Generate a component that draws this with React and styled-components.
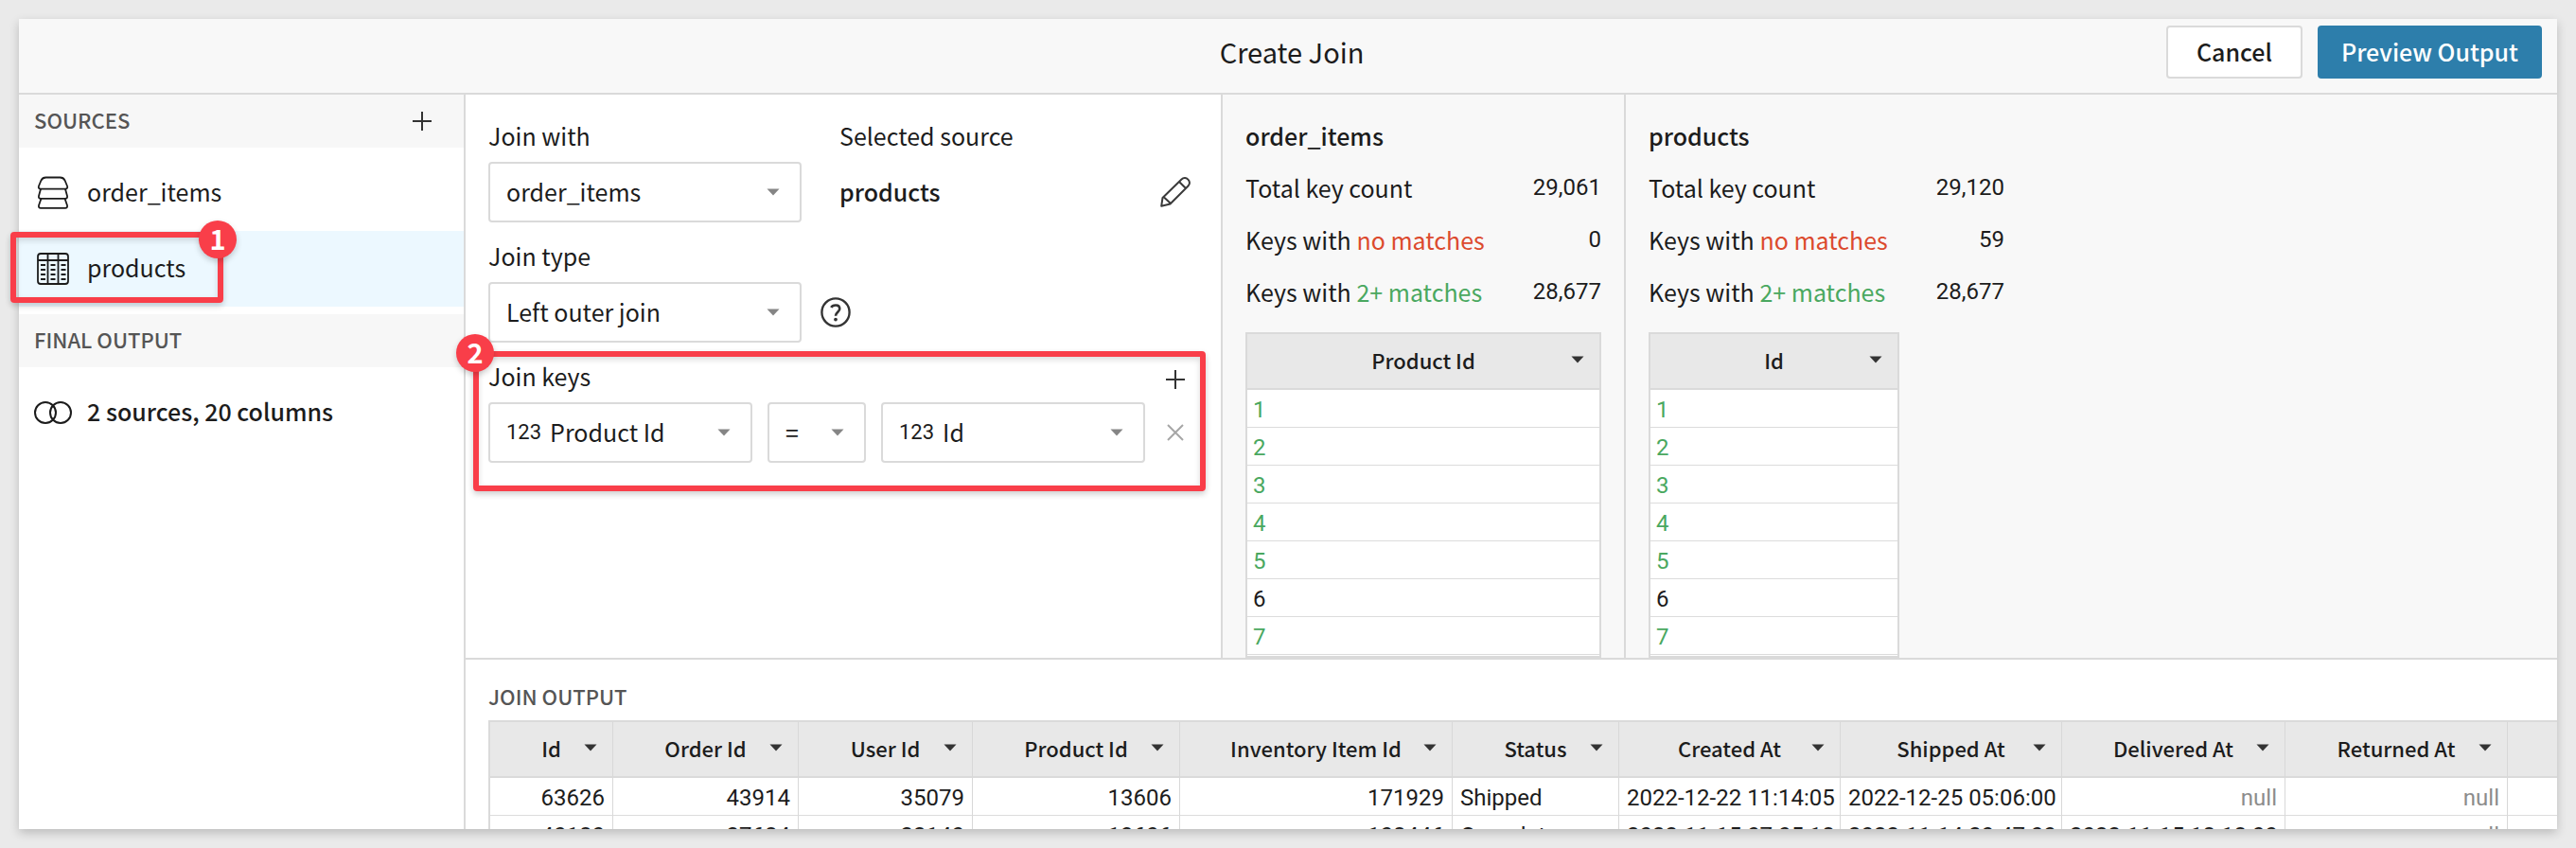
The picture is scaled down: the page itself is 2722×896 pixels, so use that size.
import React from "react";
import styled, { createGlobalStyle, css } from "styled-components";

const UI = '"Noto Sans CJK SC", "Open Sans", sans-serif';
const DATA = 'Roboto, "Liberation Sans", sans-serif';

const GlobalStyle = createGlobalStyle`
  *, *::before, *::after { box-sizing: border-box; }
  body {
    margin: 0;
    background: #eaeaea;
    color: #1c1c1c;
    font-family: ${UI};
    font-size: 25px;
    line-height: 40px;
  }
  button, select { font: inherit; color: inherit; }
`;

const Page = styled.div`
  height: 100vh;
  padding: 20px;
`;

const Frame = styled.div`
  display: flex;
  flex-direction: column;
  height: 100%;
  background: #fff;
  box-shadow: 0 4px 10px rgba(0, 0, 0, 0.2);
`;

const Header = styled.header`
  display: grid;
  grid-template-columns: 1fr auto 1fr;
  align-items: start;
  padding: 7px 16px 15px 24px;
  background: #f8f8f8;
  border-bottom: 2px solid #dadada;
`;

const Title = styled.h1`
  grid-column: 2;
  margin: 0;
  font-size: 29px;
  font-weight: 400;
  line-height: 54px;
`;

const Actions = styled.div`
  display: flex;
  justify-content: flex-end;
  gap: 16px;
`;

const Button = styled.button`
  height: 56px;
  padding: 0 ${(p) => (p.$primary ? 23 : 30)}px 2px;
  border: 2px solid ${(p) => (p.$primary ? "#2d7eab" : "#dadada")};
  border-radius: 4px;
  background: ${(p) => (p.$primary ? "#2d7eab" : "#fff")};
  color: ${(p) => (p.$primary ? "#fff" : "#1c1c1c")};
  font-weight: 500;
`;

const Body = styled.div`
  display: flex;
  flex: 1;
  min-height: 0;
`;

const Sidebar = styled.aside`
  flex: none;
  width: 472px;
  border-right: 2px solid #dadada;
`;

const SectionBar = styled.div`
  display: flex;
  align-items: center;
  justify-content: space-between;
  height: 56px;
  padding: 0 28px 0 16px;
  background: #f7f7f7;
`;

const SectionTitle = styled.h2`
  margin: 0;
  padding-bottom: 4px;
  color: #555;
  font-size: 22px;
  font-weight: 500;
  line-height: 36px;
`;

const SourceList = styled.ul`
  margin: 0;
  padding: 8px 0;
  list-style: none;
`;

const SourceRow = styled.li`
  position: relative;
  display: flex;
  align-items: center;
  gap: 16px;
  height: 80px;
  padding: 0 16px;
  background: ${(p) => (p.$selected ? "#ecf8ff" : "transparent")};
  font-weight: ${(p) => (p.$strong ? 500 : 400)};
`;

const SourceName = styled.span`
  padding-bottom: 4px;
`;

const IconButton = styled.button`
  display: flex;
  align-items: center;
  justify-content: center;
  flex: none;
  width: 32px;
  height: 32px;
  padding: 0;
  border: 0;
  background: none;
`;

const Workspace = styled.main`
  display: flex;
  flex: 1;
  flex-direction: column;
  min-width: 0;
`;

const Upper = styled.div`
  display: flex;
  flex: 1;
  min-height: 0;
`;

const JoinForm = styled.form`
  flex: none;
  width: 800px;
  padding: 23px 32px 0 24px;
  border-right: 2px solid #dadada;
`;

const FormRow = styled.div`
  position: relative;
  display: flex;
  gap: 40px;
  margin-bottom: 15px;
`;

const Field = styled.div`
  display: flex;
  flex-direction: column;
  flex: ${(p) => (p.$grow ? 1 : "none")};
  gap: 8px;
`;

const LabelLine = styled.div`
  display: flex;
  align-items: flex-end;
  justify-content: space-between;
  height: 40px;
`;

const FieldLine = styled.div`
  display: flex;
  align-items: center;
  justify-content: ${(p) => (p.$spread ? "space-between" : "flex-start")};
  gap: ${(p) => p.$gap || 16}px;
  height: 64px;
`;

const SelectedName = styled.strong`
  padding-bottom: 2px;
  font-weight: 500;
`;

const SelectBox = styled.div`
  display: flex;
  align-items: center;
  gap: 9px;
  width: ${(p) => p.$width}px;
  height: 64px;
  padding: 0 21px 0 17px;
  border: 2px solid #dadada;
  border-radius: 4px;
  background: #fff;
`;

const Select = styled.select`
  flex: 1;
  min-width: 0;
  height: 56px;
  padding: 0 0 2px;
  border: 0;
  outline: 0;
  background: transparent;
  appearance: none;
`;

const TypeMark = styled.span`
  font-family: ${DATA};
  font-size: 22px;
`;

const Annotation = styled.div`
  position: absolute;
  z-index: 2;
  border: 6px solid #f93e49;
  border-radius: 4px;
  box-shadow: 0 3px 6px rgba(0, 0, 0, 0.2), inset 0 3px 6px rgba(0, 0, 0, 0.14);
  pointer-events: none;
  ${(p) =>
    p.$target === "source"
      ? css`top: 1px; left: -9px; width: 225px; height: 75px;`
      : css`top: -6px; left: -16px; right: -16px; height: 148px;`}
`;

const Badge = styled.span`
  position: absolute;
  ${(p) => (p.$side === "right" ? "top: -18px; right: -20px;" : "top: -24px; left: -24px;")}
  width: 40px;
  height: 40px;
  border-radius: 50%;
  background: #f93e49;
  box-shadow: 0 3px 6px rgba(0, 0, 0, 0.2);
  color: #fff;
  font-size: 29px;
  font-weight: 700;
  line-height: 36px;
  text-align: center;
`;

const StatPanel = styled.section`
  display: flex;
  flex-direction: column;
  flex: ${(p) => (p.$last ? 1 : "none")};
  min-height: 0;
  padding: 23px 24px 0;
  border-right: ${(p) => (p.$last ? 0 : 2)}px solid #dadada;
  background: #f8f8f8;
`;

const PanelTitle = styled.h2`
  margin: 0 0 8px;
  font-size: 25px;
  font-weight: 500;
  line-height: 40px;
`;

const Stats = styled.dl`
  width: 376px;
  margin: 0 0 15px;
`;

const Stat = styled.div`
  display: flex;
  justify-content: space-between;
  height: 55px;
`;

const StatLabel = styled.dt`
  line-height: 54px;
`;

const StatValue = styled.dd`
  margin: 0;
  font-family: ${DATA};
  font-size: 24px;
  line-height: 54px;
`;

const Mark = styled.span`
  color: ${(p) => (p.$good ? "#4aa860" : "#dc4a2e")};
`;

const TableFrame = styled.div`
  flex: 1;
  width: ${(p) => (p.$width ? `${p.$width}px` : "auto")};
  min-height: 0;
  overflow: hidden;
  border: 2px solid #dadada;
  ${(p) => p.$open && "border-right: 0; border-bottom: 0;"}
  background: #fff;
`;

const Table = styled.table`
  width: 100%;
  border-collapse: separate;
  border-spacing: 0;
  table-layout: fixed;
`;

const HeadCell = styled.th`
  height: 59px;
  padding: 0 16px 4px;
  border-bottom: 2px solid #dadada;
  border-right: ${(p) => (p.$line ? 1 : 0)}px solid #d8d8d8;
  background: #e8e8e8;
  font-size: 22px;
  font-weight: 500;
  line-height: 40px;
`;

const HeadLine = styled.div`
  display: grid;
  grid-template-columns: 14px 1fr 14px;
  align-items: center;
  white-space: nowrap;
`;

const HeadText = styled.span`
  grid-column: 2;
`;

const Cell = styled.td`
  height: 40px;
  padding: 3px ${(p) => (p.$line ? 8 : 6)}px 0;
  border-bottom: 1px solid #dcdcdc;
  border-right: ${(p) => (p.$line ? 1 : 0)}px solid #d8d8d8;
  color: ${(p) => (p.$tone === "null" ? "#8c8c8c" : p.$tone === "match" ? "#4aa860" : "#1c1c1c")};
  font-family: ${DATA};
  font-size: 24px;
  line-height: 36px;
  text-align: ${(p) => (p.$right ? "right" : "left")};
  white-space: nowrap;
`;

const OutputPanel = styled.section`
  display: flex;
  flex-direction: column;
  flex: none;
  height: 181px;
  padding: 20px 0 0 24px;
  border-top: 2px solid #dadada;
  background: #fff;
`;

const OutputTitle = styled(SectionTitle)`
  margin-bottom: 4px;
`;

const Arrow = ({ color = "#858585" }) => (
  <svg width="14" height="8" viewBox="0 0 14 8" aria-hidden="true">
    <path d="M0.5 0.5h13L7 7.5z" fill={color} />
  </svg>
);

const Plus = () => (
  <svg width="20" height="20" viewBox="0 0 20 20" fill="none" stroke="#333" strokeWidth="2" aria-hidden="true">
    <path d="M10 0v20M0 10h20" />
  </svg>
);

const Cross = () => (
  <svg width="20" height="20" viewBox="0 0 20 20" fill="none" stroke="#a6a6a6" strokeWidth="2" aria-hidden="true">
    <path d="M2 2l16 16M18 2L2 18" />
  </svg>
);

const Pencil = () => (
  <svg width="32" height="32" viewBox="0 0 32 32" fill="none" stroke="#3a3a3a" strokeWidth="2" strokeLinejoin="round" aria-hidden="true">
    <path d="M1.200 30.800L2.500 22 22.500 2.500c4.500-4.500 11.500 2.500 7 7L10.500 28.500zM3.500 21l7.500 7M20 5l7 7" />
  </svg>
);

const Help = () => (
  <svg width="34" height="34" viewBox="0 0 34 34" fill="none" stroke="#333" strokeWidth="2.500" aria-hidden="true">
    <circle cx="17" cy="17" r="15.500" />
    <path d="M12 11.500c1.500-3 9.500-4 9.500 1.500 0 3.500-4.500 4-4.500 8" strokeWidth="2.800" />
    <circle cx="17" cy="25" r="2" fill="#333" stroke="none" />
  </svg>
);

const DatasetIcon = () => (
  <svg width="40" height="40" viewBox="0 0 40 40" fill="none" stroke="#1c1c1c" strokeWidth="1.800" strokeLinejoin="round" aria-hidden="true">
    <path d="M12.500 3.500h15c3 0 4 1 5 3l2.500 6c.8 2-.2 3.200-2 3.200H7c-1.800 0-2.800-1.200-2-3.200l2.500-6c1-2 2-3 5-3z" />
    <path d="M7 15.700L5 23c-.5 1.800.5 2.800 2 2.800h26c1.500 0 2.500-1 2-2.800l-2-7.300" />
    <path d="M7.500 25.800L5 33c-.5 1.800.5 2.800 2 2.800h26c1.500 0 2.500-1 2-2.800l-2.500-7.200" />
  </svg>
);

const TableIcon = () => (
  <svg width="40" height="40" viewBox="0 0 40 40" fill="none" stroke="#1c1c1c" strokeWidth="1.800" aria-hidden="true">
    <rect x="4" y="4" width="32" height="32" rx="3" />
    <path d="M4 11h32M14.500 4v32M25.500 4v32" />
    <path d="M7 16h5M7 21h5M7 26h5M7 31h5M17.500 16h5M17.500 21h5M17.500 26h5M17.500 31h5M28.500 16h5M28.500 21h5M28.500 26h5M28.500 31h5" />
  </svg>
);

const JoinIcon = () => (
  <svg width="40" height="40" viewBox="0 0 40 40" fill="none" stroke="#1c1c1c" strokeWidth="2" aria-hidden="true">
    <circle cx="12" cy="20" r="11" />
    <circle cx="28" cy="20" r="11" />
  </svg>
);

const Dropdown = ({ id, label, width, mark, value }) => (
  <SelectBox $width={width}>
    {mark && <TypeMark>{mark}</TypeMark>}
    <Select id={id} aria-label={label} defaultValue={value}>
      <option>{value}</option>
    </Select>
    <Arrow />
  </SelectBox>
);

const keyRows = [1, 2, 3, 4, 5, 6, 7];

const KeyPanel = ({ name, total, missing, multiple, column, width, last }) => (
  <StatPanel $last={last}>
    <PanelTitle>{name}</PanelTitle>
    <Stats>
      <Stat><StatLabel>Total key count</StatLabel><StatValue>{total}</StatValue></Stat>
      <Stat><StatLabel>Keys with <Mark>no matches</Mark></StatLabel><StatValue>{missing}</StatValue></Stat>
      <Stat><StatLabel>Keys with <Mark $good>2+ matches</Mark></StatLabel><StatValue>{multiple}</StatValue></Stat>
    </Stats>
    <TableFrame $width={width}>
      <Table>
        <thead>
          <tr><HeadCell><HeadLine><HeadText>{column}</HeadText><Arrow color="#333" /></HeadLine></HeadCell></tr>
        </thead>
        <tbody>
          {keyRows.map((n) => (
            <tr key={n}><Cell $tone={n === 6 ? "plain" : "match"}>{n}</Cell></tr>
          ))}
        </tbody>
      </Table>
    </TableFrame>
  </StatPanel>
);

const columns = [
  ["Id", 130, true], ["Order Id", 196, true], ["User Id", 184, true], ["Product Id", 219, true],
  ["Inventory Item Id", 288, true], ["Status", 176, false], ["Created At", 234, true],
  ["Shipped At", 234, true], ["Delivered At", 236, true], ["Returned At", 235, true],
];

const outputRows = [
  ["63626", "43914", "35079", "13606", "171929", "Shipped", "2022-12-22 11:14:05", "2022-12-25 05:06:00", "null", "null"],
  ["40180", "27684", "22140", "13606", "108446", "Complete", "2022-11-15 07:05:18", "2022-11-14 20:47:00", "2022-11-15 18:18:00", "null"],
];

export default function App() {
  return (
    <>
      <GlobalStyle />
      <Page>
        <Frame>
          <Header>
            <Title>Create Join</Title>
            <Actions>
              <Button type="button">Cancel</Button>
              <Button type="button" $primary>Preview Output</Button>
            </Actions>
          </Header>
          <Body>
            <Sidebar>
              <SectionBar>
                <SectionTitle>SOURCES</SectionTitle>
                <IconButton type="button" aria-label="Add source"><Plus /></IconButton>
              </SectionBar>
              <SourceList>
                <SourceRow><DatasetIcon /><SourceName>order_items</SourceName></SourceRow>
                <SourceRow $selected>
                  <TableIcon /><SourceName>products</SourceName>
                  <Annotation $target="source"><Badge $side="right">1</Badge></Annotation>
                </SourceRow>
              </SourceList>
              <SectionBar><SectionTitle>FINAL OUTPUT</SectionTitle></SectionBar>
              <SourceList>
                <SourceRow $strong><JoinIcon /><SourceName>2 sources, 20 columns</SourceName></SourceRow>
              </SourceList>
            </Sidebar>
            <Workspace>
              <Upper>
                <JoinForm>
                  <FormRow>
                    <Field>
                      <label htmlFor="join-with">Join with</label>
                      <Dropdown id="join-with" width={331} value="order_items" />
                    </Field>
                    <Field $grow>
                      <span>Selected source</span>
                      <FieldLine $spread>
                        <SelectedName>products</SelectedName>
                        <IconButton type="button" aria-label="Edit source"><Pencil /></IconButton>
                      </FieldLine>
                    </Field>
                  </FormRow>
                  <FormRow>
                    <Field>
                      <label htmlFor="join-type">Join type</label>
                      <FieldLine $gap={20}>
                        <Dropdown id="join-type" width={331} value="Left outer join" />
                        <IconButton type="button" aria-label="Help"><Help /></IconButton>
                      </FieldLine>
                    </Field>
                  </FormRow>
                  <FormRow>
                    <Field $grow>
                      <LabelLine>
                        <label htmlFor="left-key">Join keys</label>
                        <IconButton type="button" aria-label="Add join key"><Plus /></IconButton>
                      </LabelLine>
                      <FieldLine>
                        <Dropdown id="left-key" width={279} mark="123" value="Product Id" />
                        <Dropdown label="Operator" width={104} value="=" />
                        <Dropdown label="Right key" width={279} mark="123" value="Id" />
                        <IconButton type="button" aria-label="Remove join key"><Cross /></IconButton>
                      </FieldLine>
                    </Field>
                    <Annotation $target="keys"><Badge $side="left">2</Badge></Annotation>
                  </FormRow>
                </JoinForm>
                <KeyPanel name="order_items" total="29,061" missing="0" multiple="28,677" column="Product Id" width={376} />
                <KeyPanel name="products" total="29,120" missing="59" multiple="28,677" column="Id" width={265} last />
              </Upper>
              <OutputPanel>
                <OutputTitle>JOIN OUTPUT</OutputTitle>
                <TableFrame $open>
                  <Table>
                    <colgroup>
                      {columns.map(([name, width]) => <col key={name} width={width} />)}
                      <col />
                    </colgroup>
                    <thead>
                      <tr>
                        {columns.map(([name]) => (
                          <HeadCell key={name} $line><HeadLine><HeadText>{name}</HeadText><Arrow color="#333" /></HeadLine></HeadCell>
                        ))}
                        <HeadCell />
                      </tr>
                    </thead>
                    <tbody>
                      {outputRows.map((row) => (
                        <tr key={row[0]}>
                          {row.map((value, i) => (
                            <Cell key={columns[i][0]} $line $right={columns[i][2]} $tone={value === "null" ? "null" : "plain"}>{value}</Cell>
                          ))}
                          <Cell />
                        </tr>
                      ))}
                    </tbody>
                  </Table>
                </TableFrame>
              </OutputPanel>
            </Workspace>
          </Body>
        </Frame>
      </Page>
    </>
  );
}
